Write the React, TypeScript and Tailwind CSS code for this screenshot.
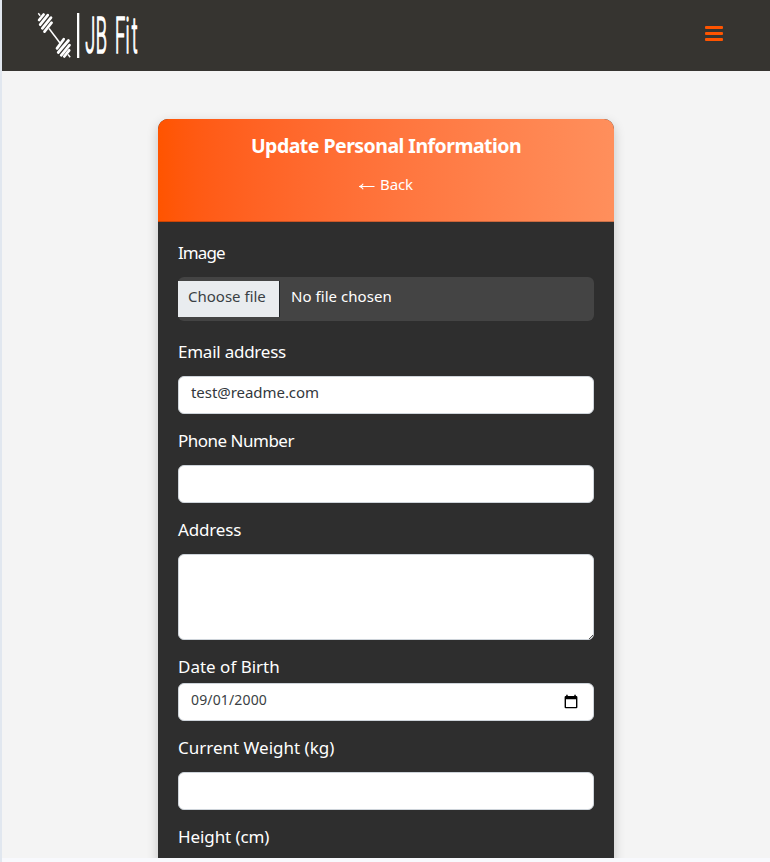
import React from "react";

const labelFont = "font-['Noto_Sans',sans-serif] text-[17px] leading-[26px] text-white";
const fieldBox = "w-full rounded-md border border-[#ced4da] bg-white";

function Logo() {
  return (
    <svg className="block" width="104" height="71" viewBox="36 0 104 71" fill="none" stroke="#fff" role="img">
      <path d="M49 28.5 60.2 43.2" strokeWidth="1.5" />
      <path d="M38.3 13.3 40.2 15.7M68 54.5 70.2 57.3" strokeWidth="1.4" />
      <path
        d="M39.1 20 43.6 14.5M40.2 24.7 47.8 15.1M42.3 28.3 51 17.6M44.5 31.6 51.6 22.7M57 48.4 63.7 39.2M58.2 52.5 68.5 40.5M61.2 55.3 69.5 45.1M64.3 56.5 69.2 50.3"
        strokeWidth="2.7"
        strokeLinecap="round"
      />
      <rect x="77" y="13" width="2.3" height="45" fill="#fff" stroke="none" />
      <g fill="#fff" stroke="#fff" strokeWidth="1.3" fontFamily="Roboto, sans-serif" fontWeight="300">
        <text transform="translate(85.2 53.3) scale(.36 1)" fontSize="50.5" x="0 29.5" vectorEffect="non-scaling-stroke">JB</text>
        <text transform="translate(115 53.3) scale(.36 1)" fontSize="50.5" x="0 29 46.5" vectorEffect="non-scaling-stroke">Fit</text>
      </g>
    </svg>
  );
}

export default function App() {
  return (
    <div className="h-[862px] overflow-hidden border-l-2 border-[#e1e7ef] bg-[#f8f9fd]">
      <div className="h-[858px] overflow-hidden bg-[#f4f4f4]">
        <header className="flex h-[71px] justify-between bg-[#363430] pr-[47px] pl-[34px]">
          <Logo />
          <button aria-label="Menu" className="mt-[26px] flex h-[15px] w-[18px] flex-col justify-between">
            <span className="h-[3px] w-full rounded-[1px] bg-[#ff5400]" />
            <span className="h-[3px] w-full rounded-[1px] bg-[#ff5400]" />
            <span className="h-[3px] w-full rounded-[1px] bg-[#ff5400]" />
          </button>
        </header>

        <main className="mt-12 ml-[156px] h-[900px] w-[456px] rounded-[10px] bg-[#2e2e2e] shadow-[0_4px_12px_rgba(0,0,0,0.2)]">
          <div className="flex h-[103px] flex-col items-center rounded-t-[10px] border-b border-black/20 bg-linear-to-r from-[#ff5400] to-[#ff8f5c] bg-origin-border pt-[13px] text-white">
            <h1 className="font-['Noto_Sans',sans-serif] text-[19.5px] leading-7 font-bold tracking-[-0.53px] whitespace-nowrap">Update Personal Information</h1>
            <a className="mt-[12px] flex items-center gap-[5px] font-['Noto_Sans',sans-serif] text-[15px] leading-6 tracking-[-0.1px]">
              <svg className="mt-[3px]" width="16" height="8" viewBox="0 0 16 8" fill="none" stroke="currentColor" strokeWidth="1.1">
                <path d="M15.5 4.5H1M4.2 1.8Q3 3.9.7 4.5 3 5.1 4.2 7.2" />
              </svg>
              <span>Back</span>
            </a>
          </div>

          <form className="px-5 pt-[18px]">
            <label className={`block tracking-[-0.9px] ${labelFont}`}>Image</label>
            <div className="mt-[11px] flex h-11 items-center rounded-md bg-[#444] font-['Noto_Sans',sans-serif] text-[15px]">
              <span className="flex h-9 w-[102px] border-r border-[#212529] bg-[#e9ecef] pt-[3px] pl-[10px] leading-6 text-[#3a3f44]">Choose file</span>
              <span className="-mt-1.5 pl-[11px] leading-6 tracking-[0.05px] text-white">No file chosen</span>
            </div>

            <label className={`mt-[18px] block tracking-[-0.24px] ${labelFont}`}>Email address</label>
            <div className={`mt-[11px] h-[38px] px-3 pt-[3px] font-['Noto_Sans',sans-serif] text-[15px] leading-6 tracking-[-0.05px] text-[#33383d] ${fieldBox}`}>test@readme.com</div>

            <label className={`mt-[14px] block tracking-[-0.5px] ${labelFont}`}>Phone Number</label>
            <div className={`mt-[11px] h-[38px] ${fieldBox}`} />

            <label className={`mt-[14px] block tracking-[-0.15px] ${labelFont}`}>Address</label>
            <div className={`mt-[11px] flex h-[86px] items-end justify-end ${fieldBox}`}>
              <svg width="4" height="4" viewBox="0 0 4 4" stroke="#555"><path d="M0 4 4 0" /></svg>
            </div>

            <label className={`mt-[14px] block ${labelFont}`}>Date of Birth</label>
            <div className={`mt-[3px] flex h-[38px] justify-between pr-[15px] pl-3 ${fieldBox}`}>
              <span className="pt-[4px] font-['Noto_Sans',sans-serif] text-[14px] leading-6 tracking-[0.15px] text-[#3a3f44]">09/01/2000</span>
              <svg className="mt-[10px]" width="14" height="15" viewBox="0 0 14 15">
                <path fill="#000" fillRule="evenodd" d="M2.2.7h1.5V2h6.6V.7h1.5V2h.4q1.2 0 1.2 1.2v10q0 1.1-1.2 1.1H1.8Q.6 14.3.6 13.2v-10Q.6 2 1.8 2h.4ZM2 5.3V13h10V5.3Z" />
              </svg>
            </div>

            <label className={`mt-[14px] block ${labelFont}`}>Current Weight (kg)</label>
            <div className={`mt-[11px] h-[38px] ${fieldBox}`} />

            <label className={`mt-[14px] block tracking-[-0.1px] ${labelFont}`}>Height (cm)</label>
          </form>
        </main>
      </div>
    </div>
  );
}
